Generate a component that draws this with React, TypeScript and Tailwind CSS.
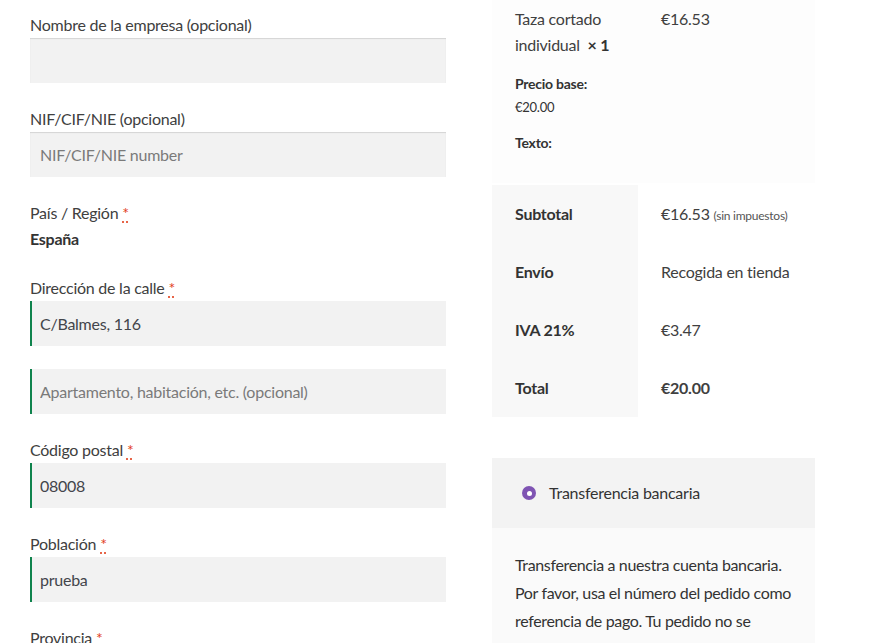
import React from 'react';

const font = { fontFamily: 'Lato, "Noto Sans", sans-serif' };

function Req() {
  return (
    <abbr title="obligatorio" className="ml-[4px] text-[#e2401c] no-underline">
      <span className="underline decoration-dotted decoration-[#e2401c] underline-offset-[3px]">*</span>
    </abbr>
  );
}

interface FieldProps {
  label?: string;
  required?: boolean;
  value?: string;
  placeholder?: string;
  valid?: boolean;
  className?: string;
}

function Field({ label, required, value, placeholder, valid, className }: FieldProps) {
  return (
    <div className={className ?? 'mb-[22px]'}>
      {label && (
        <label className="block text-[16px] leading-[27px] text-[#404040]">
          {label}
          {required && <Req />}
        </label>
      )}
      <input
        readOnly
        value={value ?? ''}
        placeholder={placeholder}
        className={
          'block h-[45px] w-full bg-[#f2f2f2] px-[10px] text-[16px] tracking-[-0.25px] text-[#43454b] outline-none placeholder:text-[#7a7a7a] ' +
          (valid ? 'shadow-[inset_2px_0_0_#0f834d]' : 'shadow-[inset_0_1px_1px_rgba(0,0,0,0.125)]')
        }
      />
    </div>
  );
}

const totals = [
  { label: 'Subtotal', value: <>€16.53 <small className="text-[12px] text-[#555]">(sin impuestos)</small></> },
  { label: 'Envío', value: 'Recogida en tienda' },
  { label: 'IVA 21%', value: '€3.47' },
  { label: 'Total', value: <strong className="font-bold">€20.00</strong> },
];

export default function App() {
  return (
    <div style={font} className="flex h-[643px] w-[875px] overflow-hidden bg-white tracking-[-0.25px] text-[#404040]">
      {/* billing form */}
      <div className="ml-[30px] w-[416px] shrink-0 pt-[11px]">
        <Field label="Nombre de la empresa (opcional)" />
        <Field label="NIF/CIF/NIE (opcional)" placeholder="NIF/CIF/NIE number" />

        <div className="mb-[22px]">
          <label className="block text-[16px] leading-[27px] text-[#404040]">
            País / Región
            <Req />
          </label>
          <strong className="block text-[16px] leading-[26px] font-bold text-[#333]">España</strong>
        </div>

        <Field label="Dirección de la calle" required value="C/Balmes, 116" valid className="mb-[23px]" />
        <Field placeholder="Apartamento, habitación, etc. (opcional)" valid />
        <Field label="Código postal" required value="08008" valid />
        <Field label="Población" required value="prueba" valid />
        <Field label="Provincia" required value="" valid />
      </div>

      {/* order review */}
      <div className="ml-[46px] w-[323px] shrink-0">
        <div className="flex h-[183px] bg-[#fdfdfd]">
          <div className="w-[146px] px-[23px] pt-[6px]">
            <div className="text-[16px] leading-[26px] text-[#404040]">
              Taza cortado individual&nbsp; <strong className="font-bold text-[#333]">×&nbsp;1</strong>
            </div>
            <dl className="mt-[16px] text-[#333]">
              <dt className="text-[14px] leading-[20px] font-bold">Precio base:</dt>
              <dd className="mt-[3px] text-[13px] leading-[20px]">€20.00</dd>
              <dt className="mt-[16px] text-[14px] leading-[20px] font-bold">Texto:</dt>
            </dl>
          </div>
          <div className="px-[23px] pt-[6px] text-[16px] leading-[26px] text-[#404040]">€16.53</div>
        </div>

        <div className="mt-[2px] grid grid-cols-[146px_1fr]">
          {totals.map((t) => (
            <React.Fragment key={t.label}>
              <div className="flex h-[58px] items-center bg-[#f8f8f8] px-[23px] text-[16px] font-bold text-[#333]">
                {t.label}
              </div>
              <div className="flex h-[58px] items-center px-[23px] text-[16px] whitespace-nowrap text-[#404040]">
                <span>{t.value}</span>
              </div>
            </React.Fragment>
          ))}
        </div>

        <div className="mt-[41px]">
          <div className="flex h-[70px] items-center bg-[#f3f3f3] pl-[30px]">
            <span className="flex h-[14px] w-[14px] items-center justify-center rounded-full bg-[#7f54b3]">
              <span className="h-[5px] w-[5px] rounded-full bg-white" />
            </span>
            <span className="ml-[13px] text-[16px] text-[#333]">Transferencia bancaria</span>
          </div>
          <div className="bg-[#fafafa] pt-[23px] pr-[14px] pb-[23px] pl-[23px] text-[16px] leading-[28px] tracking-[-0.35px] text-[#333]">
            Transferencia a nuestra cuenta bancaria. Por favor, usa el número del pedido como referencia de pago. Tu
            pedido no se procesará hasta que se haya enviado el importe en nuestra cuenta.
          </div>
        </div>
      </div>
    </div>
  );
}
